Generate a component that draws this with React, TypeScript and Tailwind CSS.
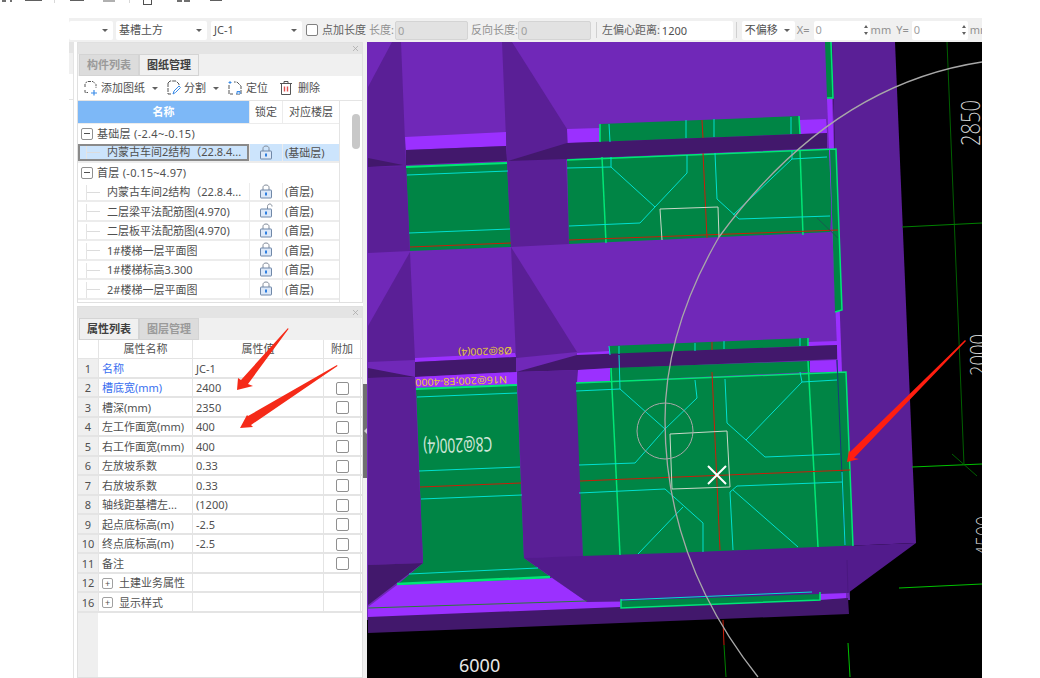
import { X } from "lucide-react";

const font = { fontFamily: '"Noto Sans", "Noto Sans CJK SC", sans-serif' };

const P = "#7028b8"; // main purple
const D = "#5a1f96"; // side faces
const N = "#42186c"; // darkest faces
const B = "#9b30ff"; // bright strip
const G = "#008545"; // slab green
const L = "#00e676"; // bright green line
const C = "#00e0d0"; // cyan line
const R = "#c81e0a"; // red axis

const polys: [string, string][] = [
  // right band and big fill
  [P, "367,42 832,42 840,360 850,600 367,620"],
  [D, "832,42 895,42 916,543 845,546"],
  // top row
  [D, "368,87 392,42 401,42 406,166 368,167"],
  [D, "502,42 512,42 567,129 567,160 507,162"],
  [B, "405,137 506,132 506,146 406,150"],
  [N, "406,150 506,146 507,161 406,165"],
  [N, "368,158 403,165 368,167"],
  [G, "406,166 507,162 511,247 410,251"],
  [D, "507,161 566,159 569,244 511,247"],
  [D, "368,167 406,166 410,251 368,253"],
  [B, "567,129 600,128 600,142 568,143"],
  [G, "600,124 799,116 800,134 600,142"],
  [B, "799,120 826,119 827,133 800,134"],
  [N, "508,161 567,143 827,133 827,148 566,159"],
  [G, "567,159 836,149 830,232 569,244"],
  [G, "825,42 831,42 833,98 827,98"],
  [B, "827,99 832,99 842,372 838,372"],
  [G, "830,149 836,149 842,310 835,312"],
  // middle row
  [D, "410,252 368,326 368,362 415,360"],
  [D, "511,247 577,352 516,358"],
  [B, "415,358 515,353 516,357 415,362"],
  [N, "415,362 516,357 516,372 415,377"],
  [N, "368,368 415,377 368,378"],
  [G, "609,346 808,338 808,346 610,355"],
  [B, "577,353 609,351 610,355 577,356"],
  [B, "808,342 837,341 837,345 808,346"],
  [N, "516,372 577,355 837,345 837,359 578,370"],
  // lower row
  [B, "415,377 517,372 517,385 416,388"],
  [G, "416,388 517,385 524,558 552,578 397,585 423,563"],
  [D, "368,378 415,377 423,563 368,565"],
  [D, "517,372 578,370 583,557 524,558"],
  [N, "368,565 423,563 368,605"],
  [B, "578,370 610,368 610,381 577,383"],
  [G, "610,368 810,361 810,372 610,381"],
  [B, "810,361 836,360 837,372 810,372"],
  [G, "576,383 846,372 853,546 583,557"],
  // bottom
  [B, "368,607 397,585 552,578 587,602 620,602 620,608 368,618"],
  [N, "368,617 620,607 848,598 849,614 368,633"],
  [G, "621,599 820,590 820,600 621,608"],
  [B, "820,592 846,591 846,598 820,600"],
  ["#521b8c", "524,558 670,553 916,543 848,593 587,602"],
];

const lines: [string, number, string][] = [
  // cell 1
  [L, 2, "406,167 507,163"],
  [C, 1, "407,175 508,171"],
  [C, 1, "409,233 510,229"],
  [R, 1, "410,247 511,243"],
  // top strip ticks
  [L, 1.5, "600,124 600,142"],
  [C, 1, "609,124 610,142"],
  [C, 1, "686,120 686,138"],
  [R, 1, "702,120 703,138"],
  [C, 1, "714,119 714,137"],
  [C, 1, "791,117 791,134"],
  [L, 1.5, "799,116 800,134"],
  [L, 1.5, "831,42 833,98 827,98"],
  // cell 2
  [L, 1.5, "567,160 836,149 842,310 835,312"],
  [L, 1.5, "602,157 606,243"],
  [L, 1.5, "800,150 803,235"],
  [C, 1, "567,168 611,167 655,207 640,223 569,226"],
  [C, 1, "611,157 611,167"],
  [C, 1, "655,207 687,173 687,155"],
  [C, 1, "715,153 717,199 739,219 830,216"],
  [C, 1, "733,215 792,159 827,157"],
  [C, 1, "792,159 792,151"],
  [R, 1, "569,240 838,230"],
  [R, 1, "703,153 707,238"],
  ["#c8d8c8", 1, "662,240 660,209 718,207 719,237"],
  ["#1a5a50", 1, "817,218 838,238"],
  // strip row 3
  [C, 1, "609,346 610,355"],
  [C, 1, "619,346 619,354"],
  [C, 1, "695,343 695,351"],
  [R, 1, "712,342 712,350"],
  [C, 1, "724,341 724,349"],
  [C, 1, "800,338 800,346"],
  [L, 1.5, "808,338 808,346"],
  // cell 3
  [L, 2, "416,389 517,385"],
  [C, 1, "417,397 517,393"],
  [C, 1, "419,471 520,467"],
  [R, 1, "420,487 521,483"],
  [C, 1, "421,499 522,495"],
  [C, 1, "409,574 538,568"],
  [L, 2.5, "397,584 550,577"],
  // cell 4
  [L, 1.5, "576,383 846,372 853,546"],
  [L, 1.5, "611,368 620,555"],
  [L, 1.5, "808,361 818,547"],
  ["#1a3a7a", 1, "837,360 845,545"],
  [C, 1, "842,472 845,545"],
  [C, 1, "576,391 620,389 665,429 635,463 579,465"],
  [C, 1, "619,355 620,389"],
  [C, 1, "665,429 697,398 695,380"],
  [C, 1, "725,379 727,423 765,457 840,454"],
  [C, 1, "746,440 802,382 837,380"],
  [C, 1, "802,382 800,372"],
  [C, 1, "579,493 665,489 703,523 703,552"],
  [C, 1, "638,554 683,507"],
  [C, 1, "733,550 730,492 737,486 842,482"],
  [C, 1, "733,490 798,547"],
  [R, 1, "580,481 850,470"],
  [R, 1, "712,372 720,550"],
  // bottom strip
  [L, 1.5, "621,599 621,608 820,600 820,592"],
  [C, 1, "621,600 812,592"],
  ["#2a7a3a", 1, "368,608 587,601"],
  ["#4a1880", 1, "847,560 848,593"],
  ["#c8d8c8", 1, "670,434 727,431 730,487 672,489 670,434"],
  // black area
  ["#006000", 1, "947,42 964,465"],
  ["#008000", 1, "902,227 982,223"],
  ["#00c000", 1, "912,467 982,464"],
  ["#006000", 1, "952,454 977,476"],
  ["#00c000", 1, "899,588 982,584"],
  ["#00c000", 1, "848,643 850,677"],
  [R, 1, "723,620 724,645"],
  ["#008000", 1, "724,645 726,677"],
];

function Canvas() {
  return (
    <svg className="block w-full h-full" viewBox="367 42 615 636">
      <rect x="367" y="42" width="615" height="636" fill="#000" />
      {polys.map(([fill, pts], i) => (
        <polygon key={i} points={pts} fill={fill} />
      ))}
      {lines.map(([stroke, w, pts], i) => (
        <polyline key={i} points={pts} stroke={stroke} strokeWidth={w} fill="none" />
      ))}
      <circle cx="665" cy="431" r="28" fill="none" stroke="#a8a8a8" strokeWidth="1" />
      <path d="M982 62 Q830 85 719 237 Q665 330 665 420 Q665 560 758 677" fill="none" stroke="#a8a8a8" strokeWidth="1.3" />
      <path d="M708 466 L726 484 M726 466 L708 484" stroke="#fff" strokeWidth="2" />
      <g style={font} fill="#e8e8e8">
        <text x="459" y="672" fontSize="18">6000</text>
        <text transform="translate(980 146) rotate(-90)" fontSize="26" textLength="46" lengthAdjust="spacingAndGlyphs" fontWeight="200">2850</text>
        <text transform="translate(986 376) rotate(-90)" fontSize="22" textLength="42" lengthAdjust="spacingAndGlyphs" fontWeight="200">2000</text>
        <text transform="translate(992 556) rotate(-90)" fontSize="22" textLength="40" lengthAdjust="spacingAndGlyphs" fontWeight="200">4500</text>
        <text transform="translate(492 437) rotate(178)" fontSize="20" textLength="69" lengthAdjust="spacingAndGlyphs" fill="#cfe6d8">C8@200(4)</text>
      </g>
      <g style={font} fill="#e6c83a" fontSize="10">
        <text transform="translate(512 347) rotate(178)" textLength="54" lengthAdjust="spacingAndGlyphs">Ø8@200(4)</text>
        <text transform="translate(507 376) rotate(178)" textLength="92" lengthAdjust="spacingAndGlyphs">N16@200;E8-4000</text>
      </g>
      <polygon points="965,340 966,341 854,458 859,459 847,462 849,450 850,452" fill="#ff1e10" />
    </svg>
  );
}

function Caret() {
  return <span className="block w-0 h-0 border-x-[3px] border-x-transparent border-t-[3px] border-t-[#606060]" />;
}

function Select({ label, className }: { label: string; className: string }) {
  return (
    <div className={`flex items-center justify-between h-[19px] pl-[3px] pr-[5px] bg-white rounded-[2px] text-[#505050] ${className}`}>
      <span>{label}</span>
      <Caret />
    </div>
  );
}

function Spinner({ value }: { value: string }) {
  return (
    <div className="flex items-center justify-between w-[56px] h-[19px] pl-[2px] pr-[2px] bg-white rounded-[2px] text-[#a0a0a0]">
      <span>{value}</span>
      <div className="flex flex-col gap-[4px]">
        <span className="w-0 h-0 border-x-[2.5px] border-x-transparent border-b-[3px] border-b-[#606060]" />
        <span className="w-0 h-0 border-x-[2.5px] border-x-transparent border-t-[3px] border-t-[#606060]" />
      </div>
    </div>
  );
}

function Toolbar() {
  return (
    <div className="flex items-center h-[24px] bg-[#f0f0f0] text-[11px] text-[#606060] whitespace-nowrap overflow-hidden [&>*]:shrink-0">
      <Select label="" className="w-[44px]" />
      <Select label="基槽土方" className="w-[91px] ml-[3px]" />
      <Select label="JC-1" className="w-[91px] ml-[4px]" />
      <span className="w-[12px] h-[12px] ml-[4px] bg-white border border-[#808080] rounded-[2px]" />
      <span className="ml-[4px]">点加长度</span>
      <span className="ml-[3px] text-[#909090]">长度:</span>
      <div className="w-[73px] h-[19px] ml-[1px] pl-[2px] leading-[17px] bg-[#e2e2e2] border border-[#d4d4d4] rounded-[2px] text-[#a0a0a0]">0</div>
      <span className="ml-[3px] text-[#909090]">反向长度:</span>
      <div className="w-[73px] h-[19px] pl-[2px] leading-[17px] bg-[#e2e2e2] border border-[#d4d4d4] rounded-[2px] text-[#a0a0a0]">0</div>
      <span className="w-px h-[16px] ml-[5px] bg-[#d0d0d0]" />
      <span className="ml-[5px]">左偏心距离:</span>
      <div className="w-[73px] h-[19px] pl-[2px] leading-[19px] bg-white rounded-[2px] text-[#505050]">1200</div>
      <span className="w-px h-[16px] ml-[3px] bg-[#d0d0d0]" />
      <Select label="不偏移" className="w-[53px] ml-[5px]" />
      <span className="ml-[2px] text-[#909090]">X=</span>
      <div className="ml-[4px]"><Spinner value="0" /></div>
      <span className="ml-[1px] text-[#909090]">mm</span>
      <span className="ml-[5px] text-[#909090]">Y=</span>
      <div className="ml-[3px]"><Spinner value="0" /></div>
      <span className="ml-[2px] text-[#909090]">mm</span>
    </div>
  );
}

function PanelHead() {
  return (
    <div className="flex items-center justify-end h-[11px] pr-[2px] bg-[#e4e4e4]">
      <X size={9} color="#a8a8a8" strokeWidth={2} />
    </div>
  );
}

function Tabs({ active, items }: { active: number; items: string[] }) {
  return (
    <div className="flex h-[22px] bg-[#f0f0f0] pl-px text-[11px]">
      {items.map((t, i) =>
        i === active ? (
          <div key={t} className="w-[60px] flex items-center justify-center font-semibold text-[#404040] border border-[#d4d4d4] bg-[#f0f0f0]">
            {t}
          </div>
        ) : (
          <div key={t} className="w-[60px] flex items-center justify-center font-semibold text-[#9a9a9a] border border-[#d4d4d4] bg-[#dcdcdc]">
            {t}
          </div>
        )
      )}
    </div>
  );
}

function AddIcon() {
  return (
    <svg width="16" height="16" viewBox="0 0 16 16" fill="none" stroke="#555" strokeWidth="1">
      <path d="M6 1.5H11L14 4.5V8M3 7V4L5 1.5M3 10V12.5H6" strokeDasharray="3 1" />
      <path d="M9 13H15M12 10V15.5" stroke="#3b8ce8" strokeWidth="1.2" />
    </svg>
  );
}

function SplitIcon() {
  return (
    <svg width="15" height="16" viewBox="0 0 15 16" fill="none" stroke="#555" strokeWidth="1">
      <path d="M2 3V14H6M2 3L4 1H10L13 4V6" strokeDasharray="4 1" />
      <path d="M7 14L8 11L13 6L14.5 7.5L9.5 12.5Z" stroke="#3b8ce8" />
    </svg>
  );
}

function LocateIcon() {
  return (
    <svg width="16" height="16" viewBox="0 0 16 16" fill="none" stroke="#555" strokeWidth="1">
      <path d="M2 5V14H6M9 14H14V6L10 2H7" strokeDasharray="4 1" />
      <path d="M3 1V4M1.5 2.5H4.5" stroke="#3b8ce8" />
      <path d="M10 14V11.5H13V14" stroke="#3b8ce8" fill="#bcd8f8" />
    </svg>
  );
}

function TrashIcon() {
  return (
    <svg width="14" height="16" viewBox="0 0 14 16" fill="none" stroke="#555" strokeWidth="1">
      <path d="M1 3.5H13M5 3.5V1.5H9V3.5M2.5 3.5V14.5H11.5V3.5" />
      <path d="M5.5 6.5V11.5M8.5 6.5V11.5" stroke="#e05050" strokeWidth="1.4" />
    </svg>
  );
}

function Lock({ open }: { open?: boolean }) {
  return (
    <svg width="14" height="15" viewBox="0 0 14 15" fill="none">
      {open ? (
        <path d="M8.5 6V3.5C8.5 2 9.5 1 10.8 1C12 1 13 2 13 3.5" stroke="#808a98" />
      ) : (
        <path d="M4 6V3.5C4 2 5.2 1 7 1C8.8 1 10 2 10 3.5V6" stroke="#808a98" />
      )}
      <rect x="1.5" y="6" width="11" height="8" rx="0.5" fill="#dce8f8" stroke="#7088a8" />
      <rect x="6" y="8.5" width="2" height="3" fill="#2f7fe0" />
    </svg>
  );
}

const drawings = [
  { name: "内蒙古车间2结构（22.8.4...", floor: "(首层)" },
  { name: "二层梁平法配筋图(4.970)", floor: "(首层)", open: true },
  { name: "二层板平法配筋图(4.970)", floor: "(首层)" },
  { name: "1#楼梯一层平面图", floor: "(首层)" },
  { name: "1#楼梯标高3.300", floor: "(首层)" },
  { name: "2#楼梯一层平面图", floor: "(首层)" },
];

function Minus() {
  return (
    <span className="flex items-center justify-center w-[12px] h-[12px] border border-[#909090] rounded-[2px] bg-white">
      <span className="w-[6px] h-px bg-[#505050]" />
    </span>
  );
}

function GroupRow({ label }: { label: string }) {
  return (
    <div className="flex items-center h-[19.5px] pl-[3px] gap-[4px] text-[#505050]">
      <Minus />
      <span className="tracking-[0.3px]">{label}</span>
    </div>
  );
}

function DrawingRow({ name, floor, open, selected }: { name: string; floor: string; open?: boolean; selected?: boolean }) {
  return (
    <div className={`flex h-[19.5px] border-b-2 border-[#ececec] ${selected ? "bg-[#cce4fc]" : ""}`}>
      <div className={`flex items-center w-[171px] text-[#505050] ${selected ? "border-2 border-[#8a8a8a]" : "pt-[2px]"}`}>
        <span className={`flex items-center w-[14px] h-full border-l border-[#e4e4e4] ${selected ? "ml-[6px]" : "ml-[8px]"}`}>
          <span className="w-full h-px bg-[#dcdcdc]" />
        </span>
        <span className="ml-[7px] truncate">{name}</span>
      </div>
      <div className="flex items-center justify-center w-[33px] border-l border-[#ececec]">
        <Lock open={open} />
      </div>
      <div className="flex-1 flex items-center pt-[2px] pl-[2px] border-l border-[#ececec] text-[#505050]">{floor}</div>
    </div>
  );
}

function DrawingPanel() {
  return (
    <div className="flex flex-col h-[261px] border border-[#e0e0e0] bg-white text-[11px]">
      <PanelHead />
      <Tabs active={1} items={["构件列表", "图纸管理"]} />
      <div className="flex items-center h-[25px] pl-[4px] border-b border-[#e4e4e4] text-[#505050]">
        <AddIcon />
        <span className="ml-[3px]">添加图纸</span>
        <span className="ml-[7px]"><Caret /></span>
        <span className="ml-[8px]"><SplitIcon /></span>
        <span className="ml-[3px]">分割</span>
        <span className="ml-[7px]"><Caret /></span>
        <span className="ml-[8px]"><LocateIcon /></span>
        <span className="ml-[3px]">定位</span>
        <span className="ml-[11px]"><TrashIcon /></span>
        <span className="ml-[5px]">删除</span>
      </div>
      <div className="flex flex-1 min-h-0">
        <div className="w-[262px] overflow-hidden border-r border-[#e4e4e4]">
          <div className="flex h-[23px] border-b border-[#ececec]">
            <div className="flex items-center justify-center w-[171px] bg-[#7db8f7] text-white font-semibold">名称</div>
            <div className="flex items-center justify-center w-[33px] border-l border-[#ececec] text-[#505050]">锁定</div>
            <div className="flex-1 flex items-center justify-center border-l border-[#ececec] text-[#505050]">对应楼层</div>
          </div>
          <GroupRow label="基础层 (-2.4~-0.15)" />
          <DrawingRow name="内蒙古车间2结构（22.8.4..." floor="(基础层)" selected />
          <GroupRow label="首层 (-0.15~4.97)" />
          {drawings.map((d, i) => (
            <DrawingRow key={i} name={d.name} floor={d.floor} open={d.open} />
          ))}
        </div>
        <div className="flex-1 pt-[13px] pl-[12px]">
          <div className="w-[8px] h-[35px] rounded-full bg-[#c8c8c8]" />
        </div>
      </div>
    </div>
  );
}

const props = [
  { no: 1, name: "名称", value: "JC-1", blue: true, noCheck: true },
  { no: 2, name: "槽底宽(mm)", value: "2400", blue: true },
  { no: 3, name: "槽深(mm)", value: "2350" },
  { no: 4, name: "左工作面宽(mm)", value: "400" },
  { no: 5, name: "右工作面宽(mm)", value: "400" },
  { no: 6, name: "左放坡系数", value: "0.33" },
  { no: 7, name: "右放坡系数", value: "0.33" },
  { no: 8, name: "轴线距基槽左...", value: "(1200)" },
  { no: 9, name: "起点底标高(m)", value: "-2.5" },
  { no: 10, name: "终点底标高(m)", value: "-2.5" },
  { no: 11, name: "备注", value: "" },
];

function PropRow({ no, name, value, blue, noCheck, plus }: { no: number; name: string; value: string; blue?: boolean; noCheck?: boolean; plus?: boolean }) {
  return (
    <div className="flex h-[19.5px] border-b-2 border-[#e4e4e4] text-[#505050]">
      <div className="flex items-center justify-center w-[20px] pt-[2px] bg-[#efefef]">{no}</div>
      <div className={`flex items-center w-[94px] pt-[2px] pl-[3px] border-l border-[#e4e4e4] ${blue ? "text-[#3a6ff0]" : ""}`}>
        {plus && (
          <span className="flex items-center justify-center w-[11px] h-[11px] mr-[6px] border border-[#a0a0a0] rounded-[2px] text-[9px] leading-none">+</span>
        )}
        {name}
      </div>
      <div className="flex items-center w-[131px] pt-[2px] pl-[3px] border-l border-[#e4e4e4]">{value}</div>
      <div className="flex items-center justify-center w-[38px] pt-[2px] border-x border-[#e4e4e4]">
        {!noCheck && !plus && <span className="w-[13px] h-[13px] border border-[#909090] rounded-[2px]" />}
      </div>
    </div>
  );
}

function PropPanel() {
  return (
    <div className="flex flex-col flex-1 border border-[#e0e0e0] bg-white text-[11px]">
      <PanelHead />
      <Tabs active={0} items={["属性列表", "图层管理"]} />
      <div className="relative flex-1">
        <div className="absolute left-0 top-0 bottom-0 w-[20px] bg-[#efefef]" />
        <div className="relative">
          <div className="flex h-[19px] border-b border-[#e4e4e4] text-[#505050]">
            <div className="w-[20px] bg-white" />
            <div className="flex items-center justify-center w-[94px] border-l border-[#e4e4e4]">属性名称</div>
            <div className="flex items-center justify-center w-[131px] border-l border-[#e4e4e4]">属性值</div>
            <div className="flex items-center justify-center w-[38px] border-x border-[#e4e4e4]">附加</div>
          </div>
          {props.map((p) => (
            <PropRow key={p.no} {...p} />
          ))}
          <PropRow no={12} name="土建业务属性" value="" plus />
          <PropRow no={16} name="显示样式" value="" plus />
        </div>
      </div>
    </div>
  );
}

function Scraps() {
  return (
    <div className="flex h-[18px] items-start">
      <span className="w-[4px] h-[2px] ml-[2px] bg-[#707070]" />
      <span className="w-[2px] h-[2px] ml-[4px] bg-[#707070]" />
      <span className="w-[17px] h-px ml-[13px] bg-[#606060]" />
      <span className="w-px h-[3px] ml-[12px] bg-[#d8d8d8]" />
      <span className="w-[14px] h-px ml-[15px] bg-[#606060]" />
      <span className="w-[12px] h-[2px] ml-[19px] bg-[#b0b0b0]" />
      <span className="w-px h-[3px] ml-[14px] bg-[#d8d8d8]" />
      <span className="w-[9px] h-[5px] ml-[13px] border-x border-b border-[#505050]" />
      <span className="w-[5px] h-[2px] ml-[25px] bg-[#707070]" />
      <span className="w-[6px] h-[2px] ml-[2px] bg-[#707070]" />
      <span className="w-[12px] h-px ml-[20px] bg-[#606060]" />
    </div>
  );
}

function PanelArrow({ points }: { points: string }) {
  return <polygon points={points} fill="#f52a18" />;
}

export default function App() {
  return (
    <div className="relative w-[1040px] h-[678px] bg-white overflow-hidden" style={font}>
      <Scraps />
      <div className="ml-[69px] w-[913px]">
        <Toolbar />
        <div className="flex h-[636px]">
          <div className="flex w-[8px]">
            <div className="w-[4px]">
              <div className="h-[11px] bg-[#e4e4e4]" />
              <div className="h-[21px] bg-[#f0f0f0]" />
              <div className="h-[26px] border-b border-[#e4e4e4]" />
            </div>
            <div className="w-px h-full bg-[#e4e4e4]" />
          </div>
          <div className="flex flex-col w-[286px] gap-[3px]">
            <DrawingPanel />
            <PropPanel />
          </div>
          <div className="w-[4px] pt-[342px] bg-[#f0f0f0]">
            <div className="flex items-center justify-center w-[4px] h-[94px] bg-[#707070]">
              <span className="w-0 h-0 border-y-[3px] border-y-transparent border-r-[3px] border-r-[#d0d0d0]" />
            </div>
          </div>
          <div className="w-[615px]">
            <Canvas />
          </div>
        </div>
      </div>
      {/* hand-drawn arrows on top of the property table */}
      <svg className="absolute left-0 top-0 pointer-events-none" width="370" height="678">
        <PanelArrow points="288,328 288.5,329 248,384 253,386 237,390 238,378 241,380" />
        <PanelArrow points="337,365 337.5,366 251,425 253,427 240,428 247,415 248,416" />
      </svg>
    </div>
  );
}
